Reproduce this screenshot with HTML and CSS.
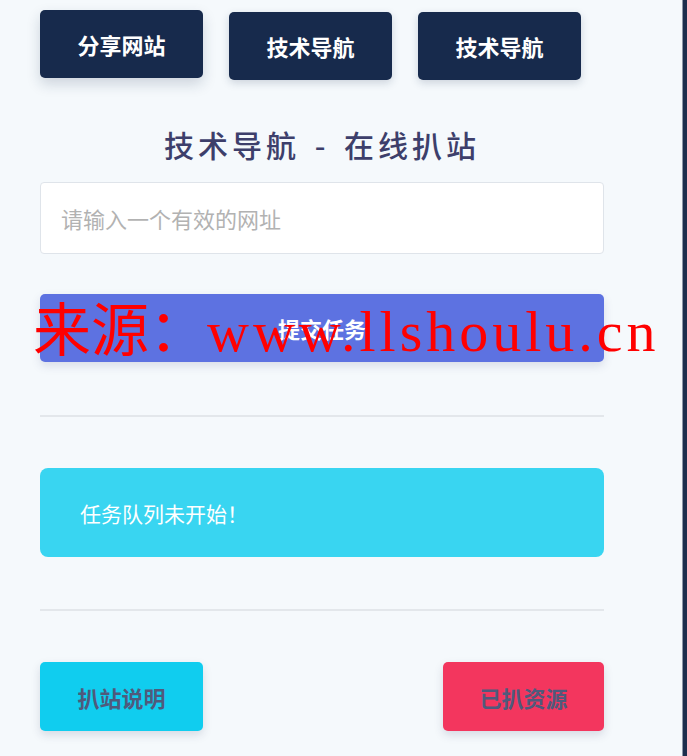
FILE: index.html
```html
<!DOCTYPE html>
<html lang="zh-CN">
<head>
<meta charset="utf-8">
<title>技术导航 - 在线扒站</title>
<link rel="stylesheet" href="styles.css">
</head>
<body>
<div class="page">
  <main class="main">
    <nav class="top-nav">
      <a class="nav-btn raised">分享网站</a>
      <a class="nav-btn">技术导航</a>
      <a class="nav-btn">技术导航</a>
    </nav>
    <h1 class="title">技术导航 - 在线扒站</h1>
    <div class="input-box">请输入一个有效的网址</div>
    <button class="submit">提交任务</button>
    <hr class="divider first">
    <div class="alert">任务队列未开始！</div>
    <hr class="divider second">
    <div class="bottom">
      <a class="act-btn info">扒站说明</a>
      <a class="act-btn danger">已扒资源</a>
    </div>
    <div class="watermark">来源：<span class="wm-url">www.llshoulu.cn</span></div>
  </main>
  <div class="edge"></div>
</div>
</body>
</html>
```
FILE: styles.css
```css
* { box-sizing: border-box; }
html, body { margin: 0; padding: 0; }
body {
  background: #f5f9fc;
  font-family: "Noto Sans CJK SC", "Noto Sans", sans-serif;
}
.page {
  display: flex;
  min-height: 756px;
}
.main {
  position: relative;
  flex: 1;
  padding: 10px 0 0 40px;
}
.edge {
  width: 5px;
  background: #1d2e4d;
  border-left: 1px solid #8d97a8;
}
.top-nav {
  display: flex;
  align-items: flex-start;
  gap: 26px;
}
.nav-btn {
  width: 163px;
  height: 68px;
  margin-top: 2px;
  display: flex;
  align-items: center;
  justify-content: center;
  background: #172a4c;
  color: #fff;
  font-size: 22px;
  font-weight: 700;
  letter-spacing: 0;
  border-radius: 5px;
  box-shadow: 0 3px 8px rgba(23, 42, 76, 0.18);
}
.nav-btn.raised {
  margin-top: 0;
  box-shadow: 0 6px 14px rgba(23, 42, 76, 0.18);
}
.title {
  margin: 44px 0 0;
  width: 564px;
  height: 40px;
  line-height: 40px;
  text-align: center;
  font-size: 30px;
  font-weight: 500;
  letter-spacing: 4px;
  word-spacing: 4px;
  color: #3d3f6b;
}
.input-box {
  margin-top: 18px;
  width: 564px;
  height: 72px;
  background: #fff;
  border: 1px solid #dfe4ea;
  border-radius: 4px;
  padding-left: 20px;
  display: flex;
  align-items: center;
  font-size: 22px;
  color: #b2b2b2;
}
.submit {
  display: flex;
  align-items: center;
  justify-content: center;
  margin-top: 40px;
  width: 564px;
  height: 68px;
  border: none;
  border-radius: 5px;
  background: #5d72e1;
  color: #fff;
  font-family: inherit;
  font-size: 22px;
  font-weight: 700;
  box-shadow: 0 4px 10px rgba(60, 70, 120, 0.15);
}
.divider {
  margin: 0;
  width: 564px;
  height: 2px;
  border: none;
  background: #e3e7eb;
}
.divider.first { margin-top: 53px; }
.divider.second { margin-top: 52px; }
.alert {
  margin-top: 51px;
  width: 564px;
  height: 89px;
  border-radius: 8px;
  background: #39d5f1;
  color: #fff;
  font-size: 21px;
  padding-left: 40px;
  display: flex;
  align-items: center;
}
.bottom {
  margin-top: 51px;
  width: 564px;
  display: flex;
  justify-content: space-between;
}
.act-btn {
  height: 69px;
  display: flex;
  align-items: center;
  justify-content: center;
  border-radius: 5px;
  color: #4f5a7c;
  font-size: 22px;
  font-weight: 700;
  letter-spacing: 0;
  box-shadow: 0 4px 10px rgba(40, 50, 90, 0.15);
}
.act-btn.info { width: 163px; background: #10cdef; }
.act-btn.danger { width: 161px; background: #f3365e; }
.watermark {
  position: absolute;
  left: 33px;
  top: 292px;
  font-family: "Liberation Serif", "Noto Sans CJK SC", serif;
  font-size: 58px;
  line-height: 80px;
  color: #ff0000;
  white-space: nowrap;
  letter-spacing: 0;
}
.wm-url {
  letter-spacing: 4px;
}
```
